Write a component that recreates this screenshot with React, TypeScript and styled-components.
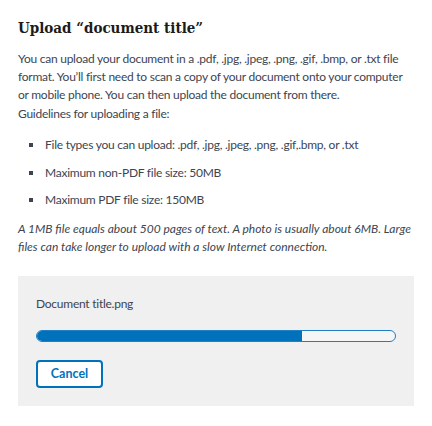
import React from "react";
import styled, { createGlobalStyle } from "styled-components";

const Global = createGlobalStyle`
  html, body { margin: 0; padding: 0; background: #fff; }
  body { font-family: "Lato", "Liberation Sans", sans-serif; color: #3d4551; }
`;

const Page = styled.div`
  padding: 16px 18px 0 18px;
  width: 396px;
`;

const Title = styled.h1`
  font-family: "DejaVu Serif Condensed", "DejaVu Serif", serif;
  font-weight: 700;
  font-size: 15px;
  line-height: 24px;
  color: #1b1b1b;
  margin: 0 0 10px 0;
`;

const Para = styled.p<{ $italic?: boolean }>`
  margin: 0 0 1px 0;
  font-size: 12px;
  letter-spacing: ${(p) => (p.$italic ? "0" : "-0.25px")};
  line-height: 18px;
  font-style: ${(p) => (p.$italic ? "italic" : "normal")};
`;

const List = styled.ul`
  margin: 13px 0 10.5px 0;
  padding: 0;
  list-style: none;
`;

const Item = styled.li`
  display: flex;
  align-items: center;
  font-size: 12px;
  letter-spacing: -0.25px;
  line-height: 18px;
  padding: 0 0 0 11px;
  margin-bottom: 9.5px;
  &::before {
    content: "";
    flex: none;
    width: 4px;
    height: 4px;
    background: #3d4551;
    margin-right: 12px;
  }
`;

const Panel = styled.div`
  background: #f0f0f0;
  margin-top: 20px;
  padding: 19px 18px 18px 18px;
  display: flex;
  flex-direction: column;
`;

const FileName = styled.div`
  font-size: 12px;
  letter-spacing: -0.25px;
  line-height: 18px;
  color: #3d4551;
`;

const Track = styled.div`
  margin-top: 17px;
  height: 12px;
  border-radius: 6px;
  border: 1.5px solid #1f7fc4;
  box-sizing: border-box;
  background: #f5f5f5;
  overflow: hidden;
`;

const Fill = styled.div`
  height: 100%;
  background: #0071bb;
`;

const CancelButton = styled.button`
  margin-top: 18px;
  align-self: flex-start;
  width: 67px;
  height: 28px;
  border: 2px solid #0071bb;
  border-radius: 4px;
  background: #fff;
  color: #0071bb;
  font-family: "Lato", "Liberation Sans", sans-serif;
  font-weight: 700;
  font-size: 12.5px;
  padding: 0;
`;

export default function App() {
  const progress = 74;
  return (
    <>
      <Global />
      <Page>
        <Title>Upload “document title”</Title>
        <Para>
          You can upload your document in a .pdf, .jpg, .jpeg, .png, .gif, .bmp, or .txt file
          format. You’ll first need to scan a copy of your document onto your computer
          or mobile phone. You can then upload the document from there.
        </Para>
        <Para>Guidelines for uploading a file:</Para>
        <List>
          <Item>File types you can upload: .pdf, .jpg, .jpeg, .png, .gif,.bmp, or .txt</Item>
          <Item>Maximum non-PDF file size: 50MB</Item>
          <Item>Maximum PDF file size: 150MB</Item>
        </List>
        <Para $italic>
          A 1MB file equals about 500 pages of text. A photo is usually about 6MB. Large
          files can take longer to upload with a slow Internet connection.
        </Para>
        <Panel>
          <FileName>Document title.png</FileName>
          <Track>
            <Fill style={{ width: `${progress}%` }} />
          </Track>
          <CancelButton>Cancel</CancelButton>
        </Panel>
      </Page>
    </>
  );
}
